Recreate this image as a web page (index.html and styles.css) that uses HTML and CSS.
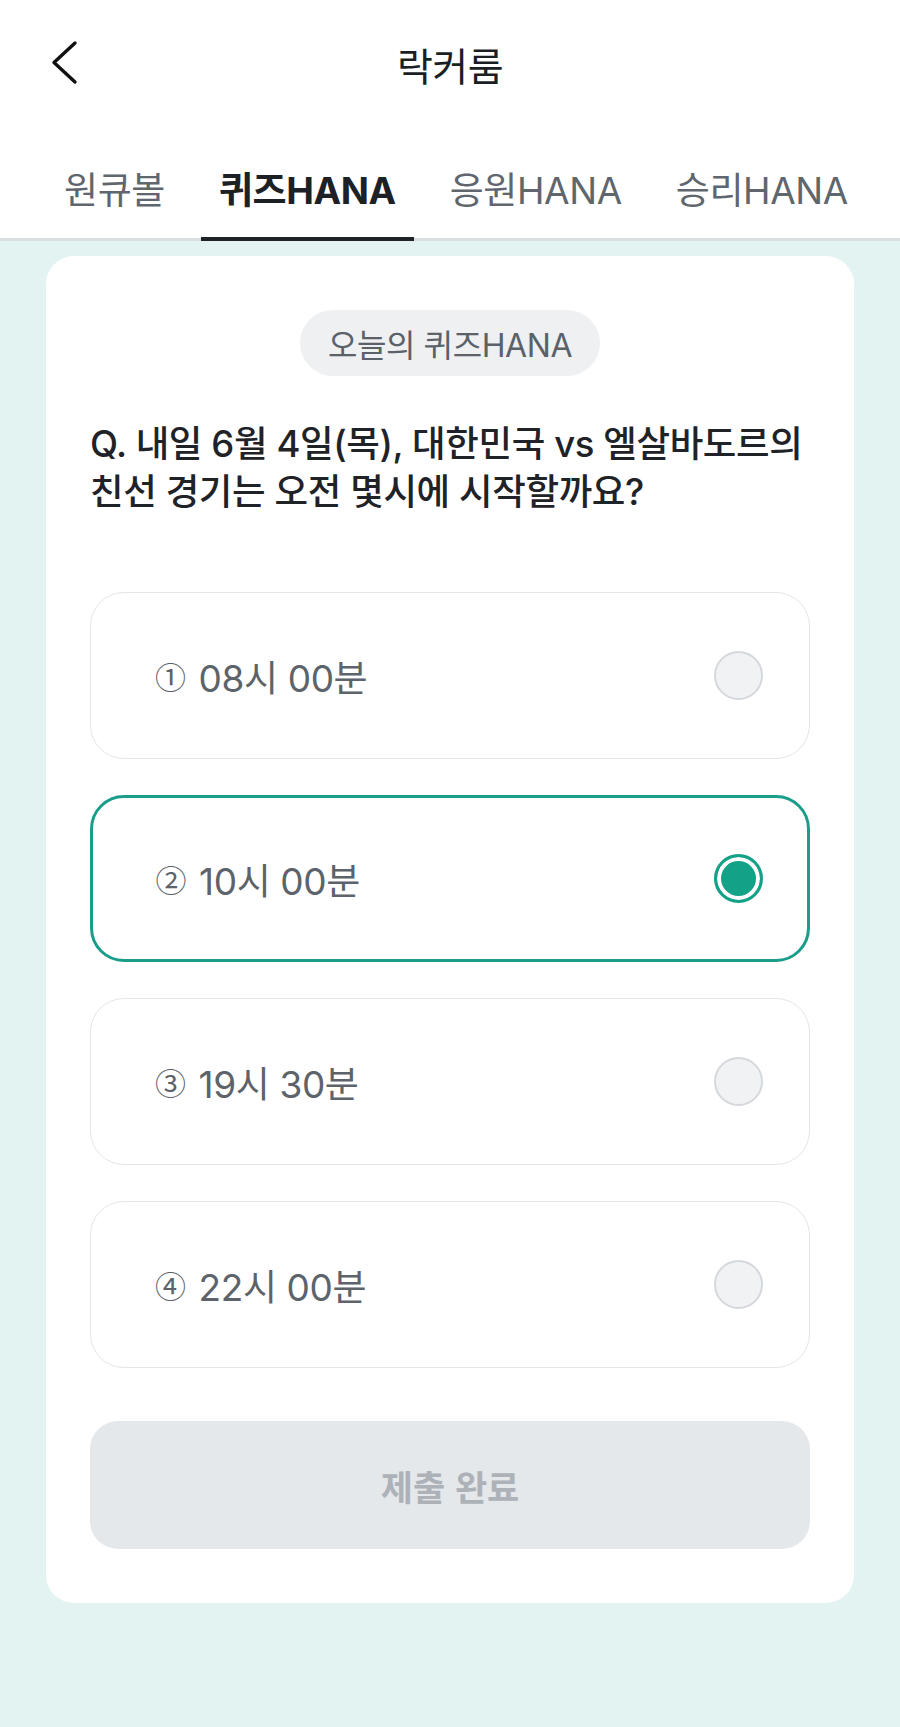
FILE: index.html
```html
<!DOCTYPE html>
<html lang="ko">
<head>
<meta charset="utf-8">
<title>락커룸</title>
<link rel="stylesheet" href="styles.css">
</head>
<body>
<header class="header">
  <div class="topbar">
    <button class="back" aria-label="뒤로">
      <svg width="30" height="48" viewBox="0 0 30 48"><polyline points="25,4 4,23.5 25,43" fill="none" stroke="#111" stroke-width="3.4" stroke-linecap="round" stroke-linejoin="round"/></svg>
    </button>
    <h1 class="title">락커룸</h1>
    <span></span>
  </div>
  <nav class="tabs">
    <a class="tab">원큐볼</a>
    <a class="tab active">퀴즈HANA</a>
    <a class="tab">응원HANA</a>
    <a class="tab">승리HANA</a>
  </nav>
</header>
<main class="main">
  <section class="card">
    <div class="pill-row"><span class="pill">오늘의 퀴즈HANA</span></div>
    <p class="question">Q. 내일 6월 4일(목), 대한민국 vs 엘살바도르의<br>친선 경기는 오전 몇시에 시작할까요?</p>
    <ul class="options">
      <li class="option"><span class="label"><span class="num">①</span> 08시 00분</span><span class="radio"></span></li>
      <li class="option selected"><span class="label"><span class="num">②</span> 10시 00분</span><span class="radio"></span></li>
      <li class="option"><span class="label"><span class="num">③</span> 19시 30분</span><span class="radio"></span></li>
      <li class="option"><span class="label"><span class="num">④</span> 22시 00분</span><span class="radio"></span></li>
    </ul>
    <button class="submit">제출 완료</button>
  </section>
</main>
</body>
</html>
```
FILE: styles.css
```css
* { box-sizing: border-box; }
html, body {
  margin: 0;
  padding: 0;
  background: #e3f3f1;
  font-family: Inter, "Noto Sans CJK KR", sans-serif;
}
.header {
  background: #ffffff;
}
.topbar {
  height: 128px;
  display: grid;
  grid-template-columns: 1fr auto 1fr;
  align-items: center;
}
.back {
  justify-self: start;
  margin-left: 50px;
  margin-top: -2px;
  padding: 0;
  border: 0;
  background: none;
  width: 30px;
  height: 48px;
  display: flex;
}
.title {
  margin: 0;
  font-family: "Noto Sans CJK KR", sans-serif;
  font-size: 39px;
  font-weight: 400;
  color: #1b1f23;
  line-height: 1;
  letter-spacing: -0.5px;
}
.tabs {
  display: flex;
  gap: 18px;
  padding-left: 46px;
  border-bottom: 3px solid #d9dee1;
}
.tab {
  position: relative;
  height: 110px;
  padding: 10px 18px 0;
  display: flex;
  align-items: center;
  font-size: 37px;
  color: #60666d;
  letter-spacing: -0.4px;
}
.tab.active {
  color: #1d2126;
  font-weight: 700;
}
.tab.active::after {
  content: "";
  position: absolute;
  left: 0;
  right: 0;
  bottom: -3px;
  height: 4px;
  background: #1f2328;
}
.main {
  padding: 15px 46px 0;
}
.card {
  background: #ffffff;
  border-radius: 28px;
  padding: 54px 44px;
}
.pill-row {
  display: flex;
  justify-content: center;
}
.pill {
  height: 66px;
  width: 300px;
  display: flex;
  align-items: center;
  justify-content: center;
  border-radius: 33px;
  background: #eef0f2;
  color: #5a6169;
  font-size: 32px;
  letter-spacing: -0.4px;
}
.question {
  margin: 44px 0 0;
  font-size: 36.5px;
  line-height: 48px;
  font-weight: 500;
  color: #1f2328;
  letter-spacing: -0.4px;
}
.options {
  list-style: none;
  margin: 76px 0 0;
  padding: 0;
  display: flex;
  flex-direction: column;
  gap: 36px;
}
.option {
  height: 167px;
  border: 1.5px solid #e3e5e8;
  border-radius: 34px;
  display: flex;
  align-items: center;
  justify-content: space-between;
  padding: 0 46px 0 64px;
}
.option.selected {
  border: 3px solid #1a9e8a;
  padding: 0 44.5px 0 62.5px;
}
.label {
  font-size: 37px;
  color: #5d636a;
  display: flex;
  align-items: center;
  letter-spacing: -0.4px;
}
.num {
  font-family: "Noto Sans CJK KR", sans-serif;
  font-size: 31px;
  margin-right: 13px;
}
.radio {
  width: 49px;
  height: 49px;
  border-radius: 50%;
  background: #f1f2f4;
  border: 2px solid #d5d8dc;
}
.selected .radio {
  background: #13a287;
  border: 3.5px solid #13a287;
  box-shadow: inset 0 0 0 4px #ffffff;
}
.submit {
  display: block;
  width: 100%;
  height: 128px;
  margin-top: 53px;
  border: 0;
  border-radius: 28px;
  background: #e5e8eb;
  color: #adb2b8;
  font-family: "Noto Sans CJK KR", sans-serif;
  font-size: 35px;
  font-weight: 700;
}
```
